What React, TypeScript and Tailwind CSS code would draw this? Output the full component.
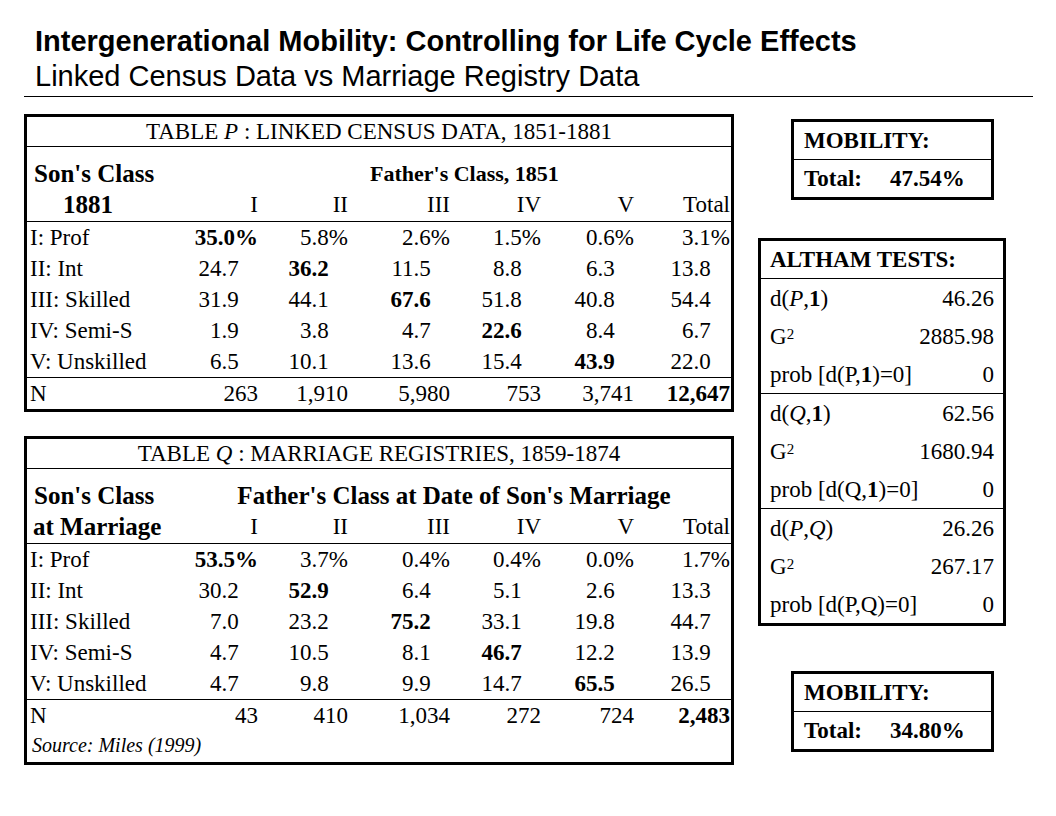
import React from "react";

const serif = "font-['Liberation_Serif','Times_New_Roman',serif]";
const cols = "grid grid-cols-[150px_81px_90px_102px_91px_93px_96px]";

type Row = { label: string; cells: string[]; bold: number };

const rowsP: Row[] = [
  { label: "I: Prof", cells: ["35.0%", "5.8%", "2.6%", "1.5%", "0.6%", "3.1%"], bold: 0 },
  { label: "II: Int", cells: ["24.7", "36.2", "11.5", "8.8", "6.3", "13.8"], bold: 1 },
  { label: "III: Skilled", cells: ["31.9", "44.1", "67.6", "51.8", "40.8", "54.4"], bold: 2 },
  { label: "IV: Semi-S", cells: ["1.9", "3.8", "4.7", "22.6", "8.4", "6.7"], bold: 3 },
  { label: "V: Unskilled", cells: ["6.5", "10.1", "13.6", "15.4", "43.9", "22.0"], bold: 4 },
];
const nP = ["263", "1,910", "5,980", "753", "3,741", "12,647"];

const rowsQ: Row[] = [
  { label: "I: Prof", cells: ["53.5%", "3.7%", "0.4%", "0.4%", "0.0%", "1.7%"], bold: 0 },
  { label: "II: Int", cells: ["30.2", "52.9", "6.4", "5.1", "2.6", "13.3"], bold: 1 },
  { label: "III: Skilled", cells: ["7.0", "23.2", "75.2", "33.1", "19.8", "44.7"], bold: 2 },
  { label: "IV: Semi-S", cells: ["4.7", "10.5", "8.1", "46.7", "12.2", "13.9"], bold: 3 },
  { label: "V: Unskilled", cells: ["4.7", "9.8", "9.9", "14.7", "65.5", "26.5"], bold: 4 },
];
const nQ = ["43", "410", "1,034", "272", "724", "2,483"];

const heads = ["I", "II", "III", "IV", "V", "Total"];

function Num({ v, bold }: { v: string; bold: boolean }) {
  const pct = v.endsWith("%");
  return (
    <div className="text-right whitespace-nowrap">
      <span className={bold ? "font-bold" : ""}>{v}</span>
      {!pct && <span className="invisible">%</span>}
    </div>
  );
}

function CrossTable({
  title,
  headTop,
  headLabel,
  rows,
  n,
  source,
}: {
  title: React.ReactNode;
  headTop: React.ReactNode;
  headLabel: React.ReactNode;
  rows: Row[];
  n: string[];
  source?: string;
}) {
  return (
    <div className={`w-[710px] border-[3px] border-black text-black ${serif}`}>
      <div className="h-[30px] border-b border-black text-center text-[23px] leading-[29px]">{title}</div>

      {/* header */}
      <div className="h-[75px] border-b border-black">
        <div className="h-[42px] pt-[12px] leading-[30px] flex font-bold">{headTop}</div>
        <div className={`${cols} h-[32px] leading-[32px] text-[23px]`}>
          {headLabel}
          {heads.map((h) => (
            <div key={h} className="text-right">{h}</div>
          ))}
        </div>
      </div>

      <div className="border-b border-black">
        {rows.map((r) => (
          <div key={r.label} className={`${cols} h-[31px] leading-[31px] text-[23px]`}>
            <div className="pl-[3px] whitespace-nowrap">{r.label}</div>
            {r.cells.map((c, i) => (
              <Num key={i} v={c} bold={i === r.bold} />
            ))}
          </div>
        ))}
      </div>

      <div className={`${cols} h-[31px] leading-[31px] text-[23px]`}>
        <div className="pl-[3px]">N</div>
        {n.map((v, i) => (
          <div key={i} className={`text-right ${i === 5 ? "font-bold" : ""}`}>{v}</div>
        ))}
      </div>
      {source && (
        <div className="h-[31px] leading-[28px] pl-[5px] text-[20px] italic">{source}</div>
      )}
    </div>
  );
}

function MobilityBox({ value }: { value: string }) {
  return (
    <div className={`ml-[33px] w-[203px] border-[3px] border-black font-bold text-[23px] text-black ${serif}`}>
      <div className="h-[38px] leading-[37px] pl-[10px] border-b border-black">MOBILITY:</div>
      <div className="h-[37px] leading-[37px] pl-[10px] flex">
        <span className="w-[86px]">Total:</span>
        <span>{value}</span>
      </div>
    </div>
  );
}

const G2 = (
  <span>
    G<span className="text-[15px] leading-none align-[5px]">2</span>
  </span>
);

function AlthamRow({ label, value }: { label: React.ReactNode; value: string }) {
  return (
    <div className="h-[38px] leading-[40px] flex justify-between pl-[9px] pr-[9px]">
      <span className="whitespace-nowrap">{label}</span>
      <span>{value}</span>
    </div>
  );
}

function Altham() {
  return (
    <div className={`w-[248px] border-[3px] border-black text-[23px] text-black ${serif}`}>
      <div className="h-[38px] leading-[38px] pl-[9px] border-b border-black font-bold">ALTHAM TESTS:</div>
      <div className="border-b border-black">
        <AlthamRow label={<>d(<i>P</i>,<b>1</b>)</>} value="46.26" />
        <AlthamRow label={G2} value="2885.98" />
        <AlthamRow label={<>prob [d(P,<b>1</b>)=0]</>} value="0" />
      </div>
      <div className="border-b border-black">
        <AlthamRow label={<>d(<i>Q</i>,<b>1</b>)</>} value="62.56" />
        <AlthamRow label={G2} value="1680.94" />
        <AlthamRow label={<>prob [d(Q,<b>1</b>)=0]</>} value="0" />
      </div>
      <div>
        <AlthamRow label={<>d(<i>P</i>,<i>Q</i>)</>} value="26.26" />
        <AlthamRow label={G2} value="267.17" />
        <AlthamRow label={<>prob [d(P,Q)=0]</>} value="0" />
      </div>
    </div>
  );
}

export default function App() {
  return (
    <div className="w-[1056px] h-[816px] bg-white overflow-hidden text-black">
      <div className="pt-[24px] pl-[35px] font-['Liberation_Sans',Arial,sans-serif] text-[29px] leading-[35px]">
        <div className="font-bold">Intergenerational Mobility: Controlling for Life Cycle Effects</div>
        <div>Linked Census Data vs Marriage Registry Data</div>
      </div>
      <div className="ml-[24px] mt-[2px] w-[1009px] h-px bg-black" />

      <div className="flex gap-[24px] pl-[24px] pt-[17px]">
        {/* Left: tables */}
        <div className="flex flex-col gap-[24px]">
          <CrossTable
            title={<>TABLE <i>P</i> : LINKED CENSUS DATA, 1851-1881</>}
            headTop={
              <>
                <div className="w-[150px] pl-[7px] text-[25px]">Son's Class</div>
                <div className="ml-[193px] text-[22px]">Father's Class, 1851</div>
              </>
            }
            headLabel={<div className="pl-[36px] font-bold text-[25px]">1881</div>}
            rows={rowsP}
            n={nP}
          />
          <CrossTable
            title={<>TABLE <i>Q</i> : MARRIAGE REGISTRIES, 1859-1874</>}
            headTop={
              <>
                <div className="w-[150px] pl-[7px] text-[25px]">Son's Class</div>
                <div className="flex-1 text-center text-[25px]">Father's Class at Date of Son's Marriage</div>
              </>
            }
            headLabel={<div className="pl-[6px] font-bold text-[25px] whitespace-nowrap">at Marriage</div>}
            rows={rowsQ}
            n={nQ}
            source="Source: Miles (1999)"
          />
        </div>

        {/* Right: summary stats */}
        <div className="flex flex-col pt-[5px]">
          <MobilityBox value="47.54%" />
          <div className="mt-[38px]">
            <Altham />
          </div>
          <div className="mt-[45px]">
            <MobilityBox value="34.80%" />
          </div>
        </div>
      </div>
    </div>
  );
}
